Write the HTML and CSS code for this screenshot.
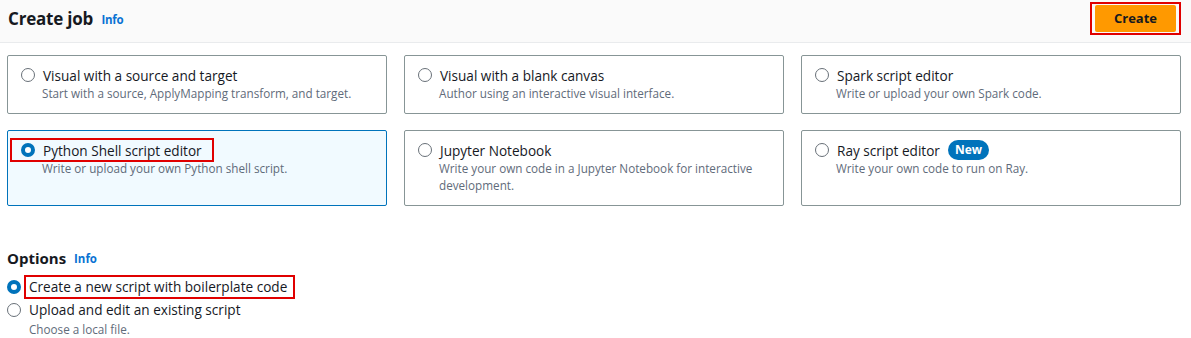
FILE: index.html
```html
<!DOCTYPE html>
<html lang="en">
<head>
    <meta charset="UTF-8">
    <title>Create job</title>
    <link rel="stylesheet" href="styles.css">
</head>
<body>
    <div class="header">
        <h1>Create job <a class="info" href="#">Info</a></h1>
        <div class="mark btn-mark"><button class="create-btn">Create</button></div>
    </div>

    <div class="tiles">
        <div class="tile">
            <div class="tile-head"><span class="radio"></span><span class="label">Visual with a source and target</span></div>
            <div class="desc">Start with a source, ApplyMapping transform, and target.</div>
        </div>
        <div class="tile">
            <div class="tile-head"><span class="radio"></span><span class="label">Visual with a blank canvas</span></div>
            <div class="desc">Author using an interactive visual interface.</div>
        </div>
        <div class="tile">
            <div class="tile-head"><span class="radio"></span><span class="label">Spark script editor</span></div>
            <div class="desc">Write or upload your own Spark code.</div>
        </div>
        <div class="tile selected">
            <div class="tile-head mark"><span class="radio checked"></span><span class="label">Python Shell script editor</span></div>
            <div class="desc">Write or upload your own Python shell script.</div>
        </div>
        <div class="tile">
            <div class="tile-head"><span class="radio"></span><span class="label">Jupyter Notebook</span></div>
            <div class="desc">Write your own code in a Jupyter Notebook for interactive development.</div>
        </div>
        <div class="tile">
            <div class="tile-head"><span class="radio"></span><span class="label">Ray script editor</span><span class="badge">New</span></div>
            <div class="desc">Write your own code to run on Ray.</div>
        </div>
    </div>

    <div class="options">
        <h2>Options <a class="info" href="#">Info</a></h2>
        <div class="option">
            <span class="radio checked"></span><span class="label mark">Create a new script with boilerplate code</span>
        </div>
        <div class="option">
            <span class="radio"></span><span class="label">Upload and edit an existing script</span>
        </div>
        <div class="desc option-desc">Choose a local file.</div>
    </div>
</body>
</html>
```

FILE: styles.css
```css
body {
    margin: 0;
    font-family: "Open Sans", Arial, sans-serif;
    color: #16191f;
    background-color: white;
}
.header {
    display: flex;
    align-items: center;
    justify-content: space-between;
    height: 36px;
    padding: 0 10px 6px 8px;
    background-color: #fafafa;
    border-bottom: 1px solid #e9ebed;
}
h1 {
    margin: 0;
    font-size: 17px;
    font-weight: 700;
    letter-spacing: -0.2px;
}
.info {
    color: #0972d3;
    font-size: 11.5px;
    font-weight: 700;
    text-decoration: none;
    margin-left: 4px;
    vertical-align: 1px;
}
.mark {
    outline: 2px solid #e00000;
}
.btn-mark {
    display: flex;
    padding: 1px 3px;
    outline: none;
    border: 2px solid #e00000;
}
.create-btn {
    width: 81px;
    height: 27px;
    border: none;
    border-radius: 2px;
    background-color: #ff9900;
    color: #16191f;
    font-family: inherit;
    font-size: 13px;
    font-weight: 700;
}
.tiles {
    display: grid;
    grid-template-columns: repeat(3, 380px);
    grid-template-rows: 59px 76px;
    column-gap: 17px;
    row-gap: 16px;
    padding: 12px 0 0 7px;
}
.tile {
    border: 1px solid #879596;
    border-radius: 2px;
    padding: 9px 13px 0 13px;
}
.tile.selected {
    background-color: #f1faff;
    border-color: #0073bb;
}
.tile-head {
    display: flex;
    align-items: center;
    height: 20px;
}
.tile-head.mark {
    margin-left: -9px;
    padding-left: 9px;
    width: 191px;
}
.radio {
    box-sizing: border-box;
    width: 14px;
    height: 14px;
    border: 1px solid #687078;
    border-radius: 50%;
    background: white;
    flex: none;
    margin-right: 8px;
}
.radio.checked {
    border: 4px solid #0073bb;
}
.label {
    font-size: 13.6px;
    color: #16191f;
}
.badge {
    margin-left: 8px;
    background-color: #0073bb;
    color: white;
    font-size: 12px;
    font-weight: 700;
    padding: 1px 7px 2px;
    border-radius: 10px;
}
.desc {
    font-size: 11.7px;
    color: #5f6b7a;
    line-height: 17px;
    margin-top: 0;
    padding-left: 21px;
}
.options {
    padding: 42px 0 0 7px;
}
h2 {
    margin: 0 0 7px 0;
    font-size: 15px;
    font-weight: 700;
}
.option {
    display: flex;
    align-items: center;
    height: 23px;
}
.option .label.mark {
    padding: 0 6px 0 3px;
    margin-left: -3px;
    line-height: 20px;
}
.option-desc {
    padding-left: 22px;
    margin-top: 0;
    line-height: 16px;
}
```
